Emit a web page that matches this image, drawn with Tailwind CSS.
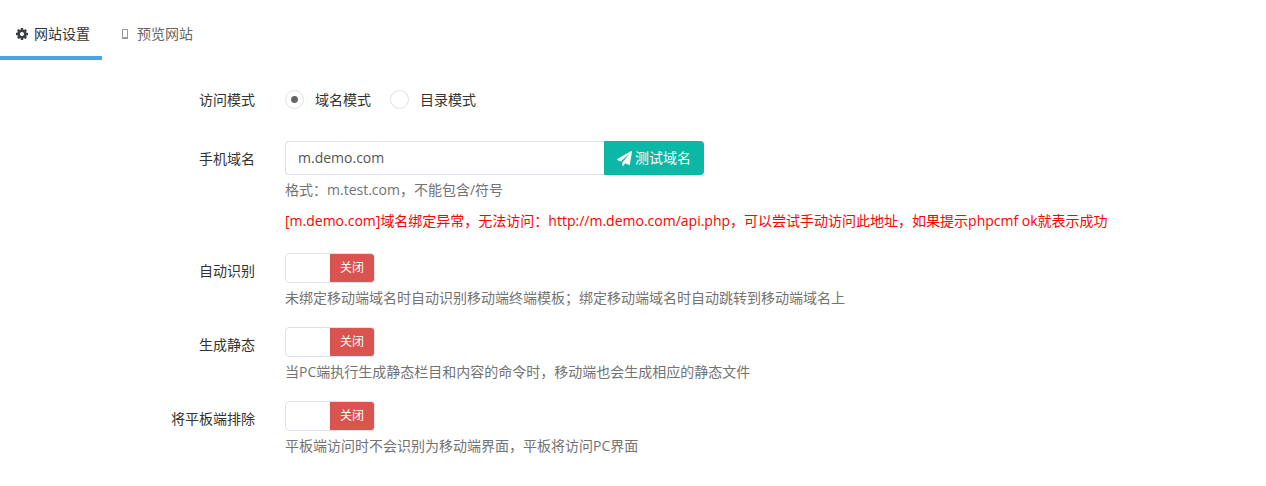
<!DOCTYPE html>
<html lang="zh-CN">
<head>
<meta charset="utf-8">
<meta name="viewport" content="width=device-width, initial-scale=1">
<title>网站设置</title>
<script src="https://cdn.jsdelivr.net/npm/@tailwindcss/browser@4"></script>
</head>
<body class="bg-white font-['Open_Sans','Noto_Sans_CJK_SC',sans-serif] text-sm leading-5 text-[#333]">
<nav class="flex h-[60px]">
  <a href="#settings" class="flex items-center gap-1.5 border-b-4 border-[#44a9e2] pt-3 pr-3 pl-4 text-[#333]">
    <svg class="size-3" viewBox="0 0 1536 1536" fill="#3b3f44" aria-hidden="true"><path d="M1024 768q0-106-75-181t-181-75-181 75-75 181 75 181 181 75 181-75 75-181zm512-109v222q0 12-8 23t-20 13l-185 28q-19 54-39 91 35 50 107 138 10 12 10 25t-9 23q-27 37-99 108t-94 71q-12 0-26-9l-138-108q-44 23-91 38-16 136-29 186-7 28-36 28H657q-14 0-24.500-8.500T621 1506l-28-184q-49-16-90-37l-141 107q-10 9-25 9-14 0-25-11-126-114-165-168-7-10-7-23 0-12 8-23 15-21 51-66.500t54-70.500q-27-50-41-99L29 913q-13-2-21-12.500T0 877V655q0-12 8-23t19-13l186-28q14-46 39-92-40-57-107-138-10-12-10-24 0-10 9-23 26-36 98.500-107.500T337 135q13 0 26 10l138 107q44-23 91-38 16-136 29-186 7-28 36-28h222q14 0 24.500 8.500T915 30l28 184q49 16 90 37l142-107q9-9 24-9 13 0 25 10 129 119 165 170 7 8 7 22 0 12-8 23-15 21-51 66.500t-54 70.500q26 50 41 98l183 28q13 2 21 12.500t8 23.500z"/></svg>
    <span>网站设置</span>
  </a>
  <a href="#preview" class="flex items-center gap-2 border-b-4 border-transparent pt-3 pr-3 pl-[19px] text-[#666]">
    <svg class="h-3 w-2" viewBox="0 0 8 12" fill="#999" aria-hidden="true"><path fill-rule="evenodd" d="M1 1h6v10H1zM2 2v7h4V2z"/></svg>
    <span>预览网站</span>
  </a>
</nav>

<form>
  <fieldset class="flex gap-[30px] pt-[30px]">
    <div class="w-[255px] shrink-0 text-right" id="mode-label">访问模式</div>
    <div class="flex gap-[19px]" role="radiogroup" aria-labelledby="mode-label">
      <label class="flex items-start gap-[11px]"><input type="radio" name="mode" checked class="size-[19px] appearance-none rounded-full border border-[#e0dfee] checked:bg-[radial-gradient(circle,#666_3px,transparent_4px)]">域名模式</label>
      <label class="flex items-start gap-[11px]"><input type="radio" name="mode" class="size-[19px] appearance-none rounded-full border border-[#e0dfee] checked:bg-[radial-gradient(circle,#666_3px,transparent_4px)]">目录模式</label>
    </div>
  </fieldset>

  <div class="flex gap-[30px] pt-[31px]">
    <label for="domain" class="w-[255px] shrink-0 pt-2 text-right">手机域名</label>
    <div class="min-w-0 flex-1">
      <div class="flex h-[34px] max-w-[419px]">
        <input id="domain" type="text" value="m.demo.com" class="min-w-0 flex-1 rounded-l border border-r-0 border-[#e0dfee] px-3 text-[#555] outline-none">
        <button type="button" class="flex w-[100px] items-center justify-center gap-[3px] rounded-r bg-[#0bb7a5] text-white">
          <svg class="size-[15px]" viewBox="0 0 1792 1792" fill="currentColor" aria-hidden="true"><path d="M1764 11q33 24 27 64l-256 1536q-5 29-32 45-14 8-31 8-11 0-24-5l-453-185-242 295q-18 23-49 23-13 0-22-4-19-7-30.500-23.500T640 1728v-349l864-1059-1069 925-395-162q-37-14-40-55-2-40 32-59L1696 9q15-9 32-9 20 0 36 11z"/></svg>
          <span>测试域名</span>
        </button>
      </div>
      <p class="pt-[5px] text-[#737373]">格式：m.test.com，不能包含/符号</p>
      <p class="pt-[11px] text-[#f00]">[m.demo.com]域名绑定异常，无法访问：http://m.demo.com/api.php，可以尝试手动访问此地址，如果提示phpcmf ok就表示成功</p>
    </div>
  </div>

  <div class="flex flex-col gap-[19px] pt-[22px]">
    <div class="flex gap-[30px]">
      <div class="w-[255px] shrink-0 pt-2 text-right" id="auto">自动识别</div>
      <div class="min-w-0 flex-1">
        <button type="button" role="switch" aria-checked="false" aria-labelledby="auto" class="flex h-[30px] w-[90px] overflow-hidden rounded border border-[#e0dfee] text-xs text-white"><span class="flex-1"></span><span class="flex h-full flex-1 items-center justify-center bg-[#d9534f]">关闭</span></button>
        <p class="pt-[5px] text-[#737373]">未绑定移动端域名时自动识别移动端终端模板；绑定移动端域名时自动跳转到移动端域名上</p>
      </div>
    </div>
    <div class="flex gap-[30px]">
      <div class="w-[255px] shrink-0 pt-2 text-right" id="static">生成静态</div>
      <div class="min-w-0 flex-1">
        <button type="button" role="switch" aria-checked="false" aria-labelledby="static" class="flex h-[30px] w-[90px] overflow-hidden rounded border border-[#e0dfee] text-xs text-white"><span class="flex-1"></span><span class="flex h-full flex-1 items-center justify-center bg-[#d9534f]">关闭</span></button>
        <p class="pt-[5px] text-[#737373]">当PC端执行生成静态栏目和内容的命令时，移动端也会生成相应的静态文件</p>
      </div>
    </div>
    <div class="flex gap-[30px]">
      <div class="w-[255px] shrink-0 pt-2 text-right" id="tablet">将平板端排除</div>
      <div class="min-w-0 flex-1">
        <button type="button" role="switch" aria-checked="false" aria-labelledby="tablet" class="flex h-[30px] w-[90px] overflow-hidden rounded border border-[#e0dfee] text-xs text-white"><span class="flex-1"></span><span class="flex h-full flex-1 items-center justify-center bg-[#d9534f]">关闭</span></button>
        <p class="pt-[5px] text-[#737373]">平板端访问时不会识别为移动端界面，平板将访问PC界面</p>
      </div>
    </div>
  </div>
</form>
</body>
</html>
